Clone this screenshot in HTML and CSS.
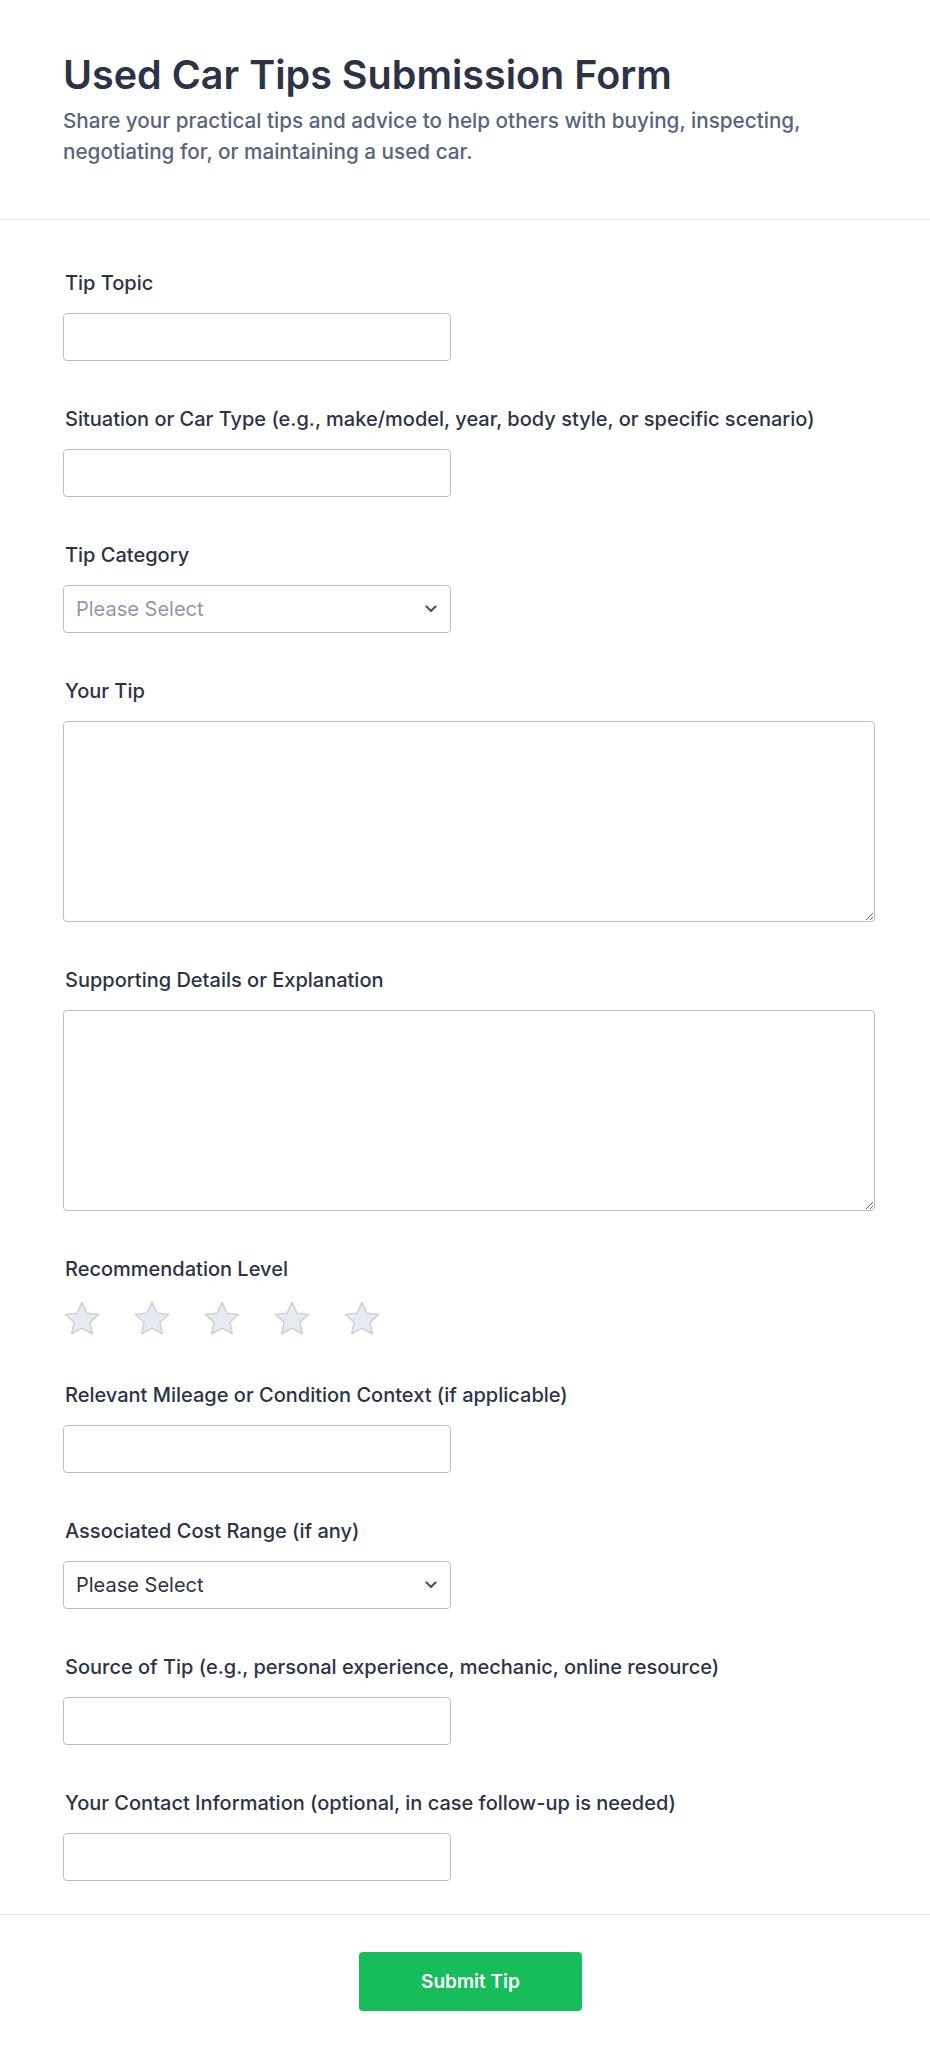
FILE: index.html
```html
<!DOCTYPE html>
<html lang="en">
<head>
  <meta charset="utf-8">
  <meta name="viewport" content="width=device-width, initial-scale=1.0">
  <title>Used Car Tips Submission Form</title>
  <link rel="stylesheet" href="styles.css">
</head>
<body>
  <form class="tips-form">
    <header class="form-head">
      <h1 class="form-title">Used Car Tips Submission Form</h1>
      <p class="form-sub">Share your practical tips and advice to help others with buying, inspecting, negotiating for, or maintaining a used car.</p>
    </header>

    <div class="form-body">
      <div class="field">
        <label class="field-label" for="topic">Tip Topic</label>
        <input class="field-input" id="topic" type="text">
      </div>

      <div class="field">
        <label class="field-label" for="situation">Situation or Car Type (e.g., make/model, year, body style, or specific scenario)</label>
        <input class="field-input" id="situation" type="text">
      </div>

      <div class="field">
        <label class="field-label" for="category">Tip Category</label>
        <div class="select-wrap">
          <select class="field-select is-empty" id="category">
            <option>Please Select</option>
          </select>
          <svg class="select-arrow" width="12" height="8" viewBox="0 0 12 8"><path d="M1.5 1.5 6 6l4.5-4.5" fill="none" stroke="#4a5468" stroke-width="2.2" stroke-linecap="round" stroke-linejoin="round"/></svg>
        </div>
      </div>

      <div class="field">
        <label class="field-label" for="tip">Your Tip</label>
        <textarea class="field-area" id="tip"></textarea>
      </div>

      <div class="field">
        <label class="field-label" for="details">Supporting Details or Explanation</label>
        <textarea class="field-area" id="details"></textarea>
      </div>

      <div class="field">
        <span class="field-label">Recommendation Level</span>
        <div class="stars">
          <svg class="star" viewBox="0 0 40 38"><path d="M20 2.5l5.2 11.3 12.3 1.4-9.1 8.4 2.5 12.2L20 29.7 9.1 35.8l2.5-12.2-9.1-8.4 12.3-1.4z"/></svg>
          <svg class="star" viewBox="0 0 40 38"><path d="M20 2.5l5.2 11.3 12.3 1.4-9.1 8.4 2.5 12.2L20 29.7 9.1 35.8l2.5-12.2-9.1-8.4 12.3-1.4z"/></svg>
          <svg class="star" viewBox="0 0 40 38"><path d="M20 2.5l5.2 11.3 12.3 1.4-9.1 8.4 2.5 12.2L20 29.7 9.1 35.8l2.5-12.2-9.1-8.4 12.3-1.4z"/></svg>
          <svg class="star" viewBox="0 0 40 38"><path d="M20 2.5l5.2 11.3 12.3 1.4-9.1 8.4 2.5 12.2L20 29.7 9.1 35.8l2.5-12.2-9.1-8.4 12.3-1.4z"/></svg>
          <svg class="star" viewBox="0 0 40 38"><path d="M20 2.5l5.2 11.3 12.3 1.4-9.1 8.4 2.5 12.2L20 29.7 9.1 35.8l2.5-12.2-9.1-8.4 12.3-1.4z"/></svg>
        </div>
      </div>

      <div class="field">
        <label class="field-label" for="mileage">Relevant Mileage or Condition Context (if applicable)</label>
        <input class="field-input" id="mileage" type="text">
      </div>

      <div class="field">
        <label class="field-label" for="cost">Associated Cost Range (if any)</label>
        <div class="select-wrap">
          <select class="field-select" id="cost">
            <option>Please Select</option>
          </select>
          <svg class="select-arrow" width="12" height="8" viewBox="0 0 12 8"><path d="M1.5 1.5 6 6l4.5-4.5" fill="none" stroke="#4a5468" stroke-width="2.2" stroke-linecap="round" stroke-linejoin="round"/></svg>
        </div>
      </div>

      <div class="field">
        <label class="field-label" for="source">Source of Tip (e.g., personal experience, mechanic, online resource)</label>
        <input class="field-input" id="source" type="text">
      </div>

      <div class="field">
        <label class="field-label" for="contact">Your Contact Information (optional, in case follow-up is needed)</label>
        <input class="field-input" id="contact" type="text">
      </div>
    </div>

    <div class="form-foot">
      <button class="submit-btn" type="submit">Submit Tip</button>
    </div>
  </form>
</body>
</html>
```

FILE: styles.css
```css
html,
body {
  margin: 0;
  padding: 0;
  background: #fff;
}
body {
  font-family: Inter, "Noto Sans", sans-serif;
  color: #2c3345;
}
.tips-form {
  width: 930px;
}

/* header */
.form-head {
  padding: 51px 63px 52px;
  border-bottom: 1px solid #e3e6ee;
}
.form-title {
  margin: 0;
  font-size: 39.5px;
  line-height: 48px;
  font-weight: 600;
  color: #2c3345;
}
.form-sub {
  margin: 6px 0 0;
  max-width: 790px;
  font-size: 20.7px;
  line-height: 31px;
  font-weight: 500;
  color: #57647e;
}

/* fields */
.form-body {
  display: flex;
  flex-direction: column;
  gap: 46px;
  padding: 51px 63px 33px;
}
.field {
  display: flex;
  flex-direction: column;
  align-items: flex-start;
}
.field-label {
  display: block;
  padding-left: 2px;
  margin-bottom: 18px;
  font-size: 20px;
  line-height: 24px;
  font-weight: 500;
  color: #2c3345;
}
.field-input,
.field-select {
  box-sizing: border-box;
  width: 388px;
  height: 48px;
  border: 1px solid #b8bdc9;
  border-radius: 4px;
  background: #fff;
  font-family: inherit;
  font-size: 20px;
  color: #2c3345;
  padding: 0 12px;
  outline: none;
}
.select-wrap {
  position: relative;
}
.field-select {
  appearance: none;
  -webkit-appearance: none;
}
.field-select.is-empty {
  color: #8f98ab;
}
.select-arrow {
  position: absolute;
  right: 14px;
  top: 20px;
  pointer-events: none;
}
.field-area {
  box-sizing: border-box;
  width: 812px;
  height: 201px;
  border: 1px solid #b8bdc9;
  border-radius: 4px;
  font-family: inherit;
  font-size: 20px;
  padding: 10px 12px;
  outline: none;
}

/* rating */
.stars {
  display: flex;
  gap: 32px;
  height: 38px;
  align-items: center;
}
.star {
  width: 38px;
  height: 36px;
  fill: #e7eaf1;
  stroke: #c8cdd8;
  stroke-width: 1.4;
  stroke-linejoin: round;
}

/* footer */
.form-foot {
  display: flex;
  justify-content: center;
  padding: 37px 0 50px 11px;
  border-top: 1px solid #e3e6ee;
}
.submit-btn {
  width: 223px;
  height: 59px;
  border: 0;
  border-radius: 4px;
  background: #18bd5b;
  color: #fff;
  font-family: inherit;
  font-size: 19px;
  font-weight: 600;
  cursor: pointer;
}
```
